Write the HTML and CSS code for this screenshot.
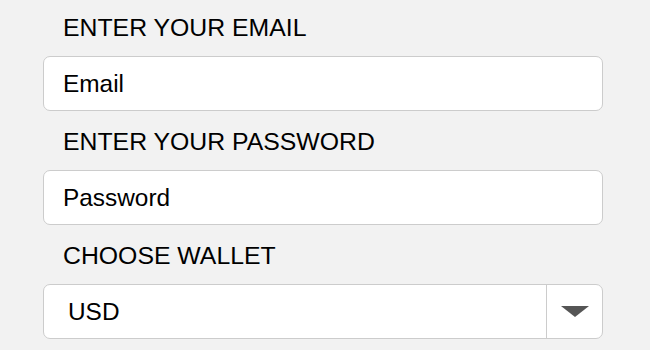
FILE: index.html
```html
<!DOCTYPE html>
<html lang="en">
<head>
  <meta charset="UTF-8" />
  <meta name="viewport" content="width=device-width, initial-scale=1.0" />
  <title>Sign in</title>
  <link rel="stylesheet" href="styles.css">
</head>
<body>

  <form class="login-form">
    <label class="field-label" for="email">ENTER YOUR EMAIL</label>
    <input class="field-input" type="text" id="email" placeholder="Email" />

    <label class="field-label" for="password">ENTER YOUR PASSWORD</label>
    <input class="field-input" type="password" id="password" placeholder="Password" />

    <label class="field-label" for="wallet">CHOOSE WALLET</label>
    <div class="select-box">
      <select class="select-input" id="wallet">
        <option>USD</option>
        <option>EUR</option>
        <option>BTC</option>
      </select>
      <div class="select-arrow">
        <svg width="28" height="12" viewBox="0 0 28 12">
          <polygon points="0,0 28,0 14,11" fill="#555" />
        </svg>
      </div>
    </div>
  </form>

</body>
</html>
```

FILE: styles.css
```css
body {
  margin: 0;
  padding: 0;
  font-family: "Liberation Sans", Arial, Helvetica, sans-serif;
  background-color: #f2f2f2;
  color: #000;
}

.login-form {
  display: flex;
  flex-direction: column;
  width: 560px;
  padding: 14px 0 0 43px;
}

.field-label {
  display: block;
  padding-left: 20px;
  font-size: 24.8px;
  line-height: 28px;
  margin-bottom: 14px;
}

.field-input {
  height: 55px;
  margin: 0 0 17px 0;
  padding: 0 19px;
  border: 1px solid #cccccc;
  border-radius: 7px;
  background-color: white;
  color: #000;
  font-family: inherit;
  font-size: 24.4px;
  box-sizing: border-box;
  outline: none;
}

.field-input::placeholder {
  color: #000;
  opacity: 1;
}

.select-box {
  display: flex;
  height: 55px;
  border: 1px solid #cccccc;
  border-radius: 7px;
  background-color: white;
  box-sizing: border-box;
  overflow: hidden;
}

.select-input {
  flex-grow: 1;
  appearance: none;
  -webkit-appearance: none;
  border: none;
  background: transparent;
  padding: 0 24px;
  font-family: inherit;
  font-size: 24.4px;
  color: #000;
  outline: none;
}

.select-arrow {
  width: 55px;
  display: flex;
  align-items: center;
  justify-content: center;
  border-left: 1px solid #cccccc;
  padding-top: 1px;
}
```
